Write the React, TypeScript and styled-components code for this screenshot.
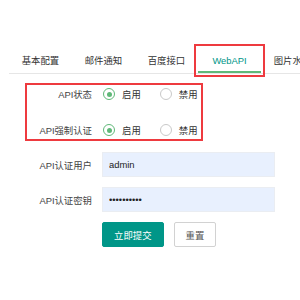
import styled, { createGlobalStyle } from "styled-components";

const GlobalStyle = createGlobalStyle`
  html, body {
    margin: 0;
    padding: 0;
    background: #fff;
    overflow: hidden;
  }
  body {
    font-family: "Liberation Sans", "Noto Sans CJK SC", sans-serif;
    font-size: 9.4px;
    color: #333;
  }
`;

const Page = styled.div`
  width: 300px;
  height: 300px;
  padding-top: 46px;
  box-sizing: border-box;
  overflow: hidden;
`;

const TabBar = styled.ul`
  display: flex;
  margin: 0 0 0 9px;
  padding: 0;
  list-style: none;
  height: 27px;
  border-bottom: 1px solid #e6e6e6;
  white-space: nowrap;
`;

const Tab = styled.li<{ $active?: boolean }>`
  position: relative;
  flex: none;
  width: 63px;
  height: 27px;
  box-sizing: border-box;
  padding-top: 3px;
  line-height: 24px;
  text-align: center;
  color: ${(p) => (p.$active ? "#009688" : "#333")};
  border-bottom: 2px solid ${(p) => (p.$active ? "#5FB878" : "transparent")};
`;

// red annotation frame drawn over the active tab
const Marker = styled.span`
  position: absolute;
  left: -4px;
  right: -4px;
  top: -2px;
  bottom: -6px;
  border: 2px solid #ee3a3f;
  pointer-events: none;
`;

const Form = styled.div`
  padding-left: 25px;
  margin-top: 9px;
`;

const Group = styled.div`
  width: 174px;
  border: 2px solid #ee3a3f;
  display: flex;
  flex-direction: column;
  gap: 18px;
  margin-bottom: 11px;
  overflow: hidden;
`;

const Row = styled.div<{ $h: number; $gap?: number }>`
  display: flex;
  align-items: center;
  height: ${(p) => p.$h}px;
  margin-bottom: ${(p) => p.$gap ?? 0}px;
  white-space: nowrap;
`;

const Label = styled.label<{ $w: number }>`
  width: ${(p) => p.$w}px;
  flex: none;
  text-align: right;
  margin-right: 10px;
  color: #444;
  white-space: nowrap;
`;

const RadioItem = styled.span`
  flex: none;
  display: inline-flex;
  align-items: center;
  margin-right: 18px;
  margin-left: 1px;
  color: #333;
  white-space: nowrap;
`;

const Circle = styled.span<{ $on?: boolean }>`
  flex: none;
  width: 12px;
  height: 12px;
  box-sizing: border-box;
  border-radius: 50%;
  border: 1px solid ${(p) => (p.$on ? "#5FB878" : "#c9c9c9")};
  margin-right: 7px;
  display: flex;
  align-items: center;
  justify-content: center;
  &::after {
    content: "";
    display: ${(p) => (p.$on ? "block" : "none")};
    width: 5px;
    height: 5px;
    border-radius: 50%;
    background: #5FB878;
  }
`;

const Input = styled.input`
  width: 173px;
  height: 25px;
  box-sizing: border-box;
  border: 1px solid #eaedf2;
  background: #e8f0fe;
  padding: 0 6px;
  font-family: "Liberation Sans", "Noto Sans CJK SC", sans-serif;
  font-size: 9.4px;
  color: #222;
  outline: none;
`;

const Button = styled.button<{ $primary?: boolean }>`
  height: 25px;
  box-sizing: border-box;
  padding: 0 11px;
  margin-right: 10px;
  border: 1px solid ${(p) => (p.$primary ? "#009688" : "#d2d2d2")};
  border-radius: 2px;
  background: ${(p) => (p.$primary ? "#009688" : "#fff")};
  color: ${(p) => (p.$primary ? "#fff" : "#555")};
  font-family: "Liberation Sans", "Noto Sans CJK SC", sans-serif;
  font-size: 9.4px;
`;

function Radio({ on, text }: { on?: boolean; text: string }) {
  return (
    <RadioItem>
      <Circle $on={on} />
      {text}
    </RadioItem>
  );
}

const tabs = ["基本配置", "邮件通知", "百度接口", "WebAPI", "图片水印"];

export default function App() {
  return (
    <Page>
      <GlobalStyle />
      <TabBar>
        {tabs.map((t) => (
          <Tab key={t} $active={t === "WebAPI"}>
            {t}
            {t === "WebAPI" && <Marker />}
          </Tab>
        ))}
      </TabBar>
      <Form>
        <Group>
          <Row $h={18}>
            <Label $w={65}>API状态</Label>
            <Radio on text="启用" />
            <Radio text="禁用" />
          </Row>
          <Row $h={18}>
            <Label $w={65}>API强制认证</Label>
            <Radio on text="启用" />
            <Radio text="禁用" />
          </Row>
        </Group>
        <Row $h={25} $gap={10}>
          <Label $w={67}>API认证用户</Label>
          <Input readOnly defaultValue="admin" />
        </Row>
        <Row $h={25} $gap={10}>
          <Label $w={67}>API认证密钥</Label>
          <Input readOnly type="password" defaultValue="1234567890" />
        </Row>
        <Row $h={25}>
          <Label $w={67} />
          <Button $primary>立即提交</Button>
          <Button>重置</Button>
        </Row>
      </Form>
    </Page>
  );
}
